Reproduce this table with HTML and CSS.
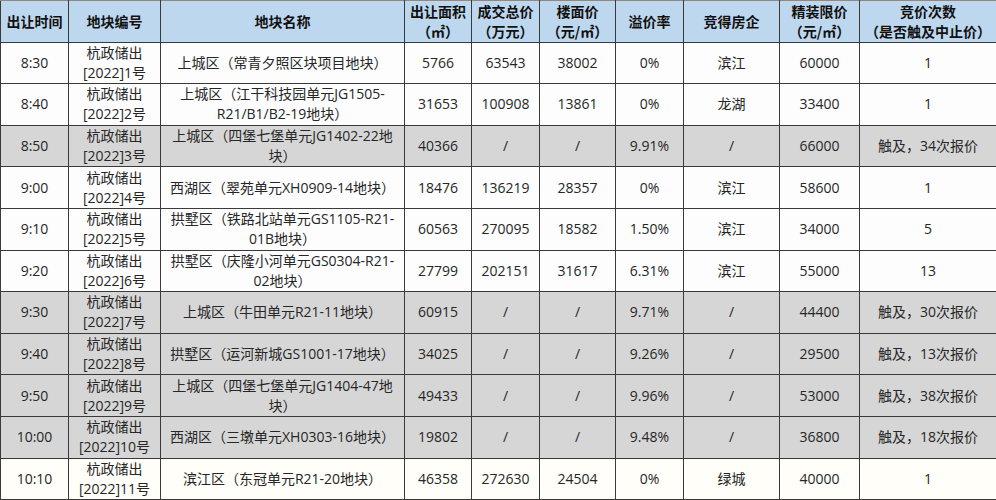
FILE: index.html
```html
<!DOCTYPE html>
<html lang="zh-CN">
<head>
<meta charset="utf-8">
<title>杭州土拍结果</title>
<link rel="stylesheet" href="styles.css">
</head>
<body>
<table class="land">
  <colgroup>
    <col class="c-time"><col class="c-code"><col class="c-name"><col class="c-area"><col class="c-total">
    <col class="c-floor"><col class="c-prem"><col class="c-winner"><col class="c-limit"><col class="c-bids">
  </colgroup>
  <thead>
    <tr>
      <th>出让时间</th><th>地块编号</th><th>地块名称</th><th>出让面积<br>（㎡）</th><th>成交总价<br>（万元）</th>
      <th>楼面价<br>（元/㎡）</th><th>溢价率</th><th>竞得房企</th><th>精装限价<br>（元/㎡）</th><th>竞价次数<br>（是否触及中止价）</th>
    </tr>
  </thead>
  <tbody>
    <tr><td>8:30</td><td>杭政储出<br>[2022]1号</td><td>上城区（常青夕照区块项目地块）</td><td>5766</td><td>63543</td><td>38002</td><td>0%</td><td>滨江</td><td>60000</td><td>1</td></tr>
    <tr><td>8:40</td><td>杭政储出<br>[2022]2号</td><td>上城区（江干科技园单元JG1505-<br>R21/B1/B2-19地块）</td><td>31653</td><td>100908</td><td>13861</td><td>0%</td><td>龙湖</td><td>33400</td><td>1</td></tr>
    <tr class="hit"><td>8:50</td><td>杭政储出<br>[2022]3号</td><td>上城区（四堡七堡单元JG1402-22地<br>块）</td><td>40366</td><td>/</td><td>/</td><td>9.91%</td><td>/</td><td>66000</td><td>触及，34次报价</td></tr>
    <tr><td>9:00</td><td>杭政储出<br>[2022]4号</td><td>西湖区（翠苑单元XH0909-14地块）</td><td>18476</td><td>136219</td><td>28357</td><td>0%</td><td>滨江</td><td>58600</td><td>1</td></tr>
    <tr><td>9:10</td><td>杭政储出<br>[2022]5号</td><td>拱墅区（铁路北站单元GS1105-R21-<br>01B地块）</td><td>60563</td><td>270095</td><td>18582</td><td>1.50%</td><td>滨江</td><td>34000</td><td>5</td></tr>
    <tr><td>9:20</td><td>杭政储出<br>[2022]6号</td><td>拱墅区（庆隆小河单元GS0304-R21-<br>02地块）</td><td>27799</td><td>202151</td><td>31617</td><td>6.31%</td><td>滨江</td><td>55000</td><td>13</td></tr>
    <tr class="hit"><td>9:30</td><td>杭政储出<br>[2022]7号</td><td>上城区（牛田单元R21-11地块）</td><td>60915</td><td>/</td><td>/</td><td>9.71%</td><td>/</td><td>44400</td><td>触及，30次报价</td></tr>
    <tr class="hit"><td>9:40</td><td>杭政储出<br>[2022]8号</td><td>拱墅区（运河新城GS1001-17地块）</td><td>34025</td><td>/</td><td>/</td><td>9.26%</td><td>/</td><td>29500</td><td>触及，13次报价</td></tr>
    <tr class="hit"><td>9:50</td><td>杭政储出<br>[2022]9号</td><td>上城区（四堡七堡单元JG1404-47地<br>块）</td><td>49433</td><td>/</td><td>/</td><td>9.96%</td><td>/</td><td>53000</td><td>触及，38次报价</td></tr>
    <tr class="hit"><td>10:00</td><td>杭政储出<br>[2022]10号</td><td>西湖区（三墩单元XH0303-16地块）</td><td>19802</td><td>/</td><td>/</td><td>9.48%</td><td>/</td><td>36800</td><td>触及，18次报价</td></tr>
    <tr class="last"><td>10:10</td><td>杭政储出<br>[2022]11号</td><td>滨江区（东冠单元R21-20地块）</td><td>46358</td><td>272630</td><td>24504</td><td>0%</td><td>绿城</td><td>40000</td><td>1</td></tr>
  </tbody>
</table>
</body>
</html>
```
FILE: styles.css
```css
html, body {
  margin: 0;
  padding: 0;
  background: #ffffff;
}
body {
  font-family: "Open Sans", "Noto Sans CJK SC", sans-serif;
  color: #262626;
}
.land {
  width: 996px;
  table-layout: fixed;
  border-collapse: collapse;
  font-size: 14px;
}
.c-time { width: 68px; }
.c-code { width: 92px; }
.c-name { width: 244px; }
.c-area { width: 67px; }
.c-total { width: 68px; }
.c-floor { width: 76px; }
.c-prem { width: 68px; }
.c-winner { width: 96px; }
.c-limit { width: 80px; }
.c-bids { width: 137px; }
.land th, .land td {
  border: 1px solid #3a3a3a;
  text-align: center;
  vertical-align: middle;
  padding: 0 2px;
  white-space: nowrap;
}
.land th {
  height: 40.6px;
  background: #bdd7ee;
  color: #111111;
  font-weight: 700;
  line-height: 20px;
  font-family: "Noto Sans CJK SC", sans-serif;
}
.land thead tr th { border-top-color: #8a8a8a; }
.land td {
  height: 40.6px;
  line-height: 20px;
  background: #fdfdfd;
}
.land tr.hit td { background: #d6d6d6; }
.land tr.last td { background: #fffef9; }
```
